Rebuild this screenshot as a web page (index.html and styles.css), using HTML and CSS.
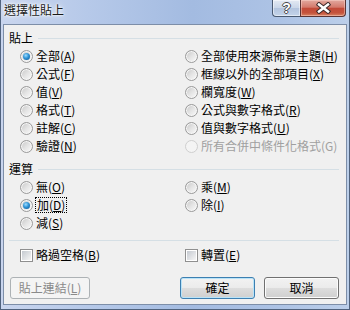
FILE: index.html
```html
<!DOCTYPE html>
<html lang="zh-Hant">
<head>
    <meta charset="UTF-8">
    <title>選擇性貼上</title>
    <link rel="stylesheet" href="styles.css">
</head>
<body>
    <div class="window">
        <div class="titlebar">
            <span class="title">選擇性貼上</span>
            <div class="caption-buttons">
                <span class="cap-btn help">?</span>
                <span class="cap-btn close">
                    <svg width="15" height="12" viewBox="0 0 15 12">
                        <path d="M3 2.5 L12 9.5 M12 2.5 L3 9.5" stroke="#3d2a2a" stroke-width="4.5" stroke-linecap="square"/>
                        <path d="M3 2.5 L12 9.5 M12 2.5 L3 9.5" stroke="#ffffff" stroke-width="2.5" stroke-linecap="square"/>
                    </svg>
                </span>
            </div>
        </div>

        <div class="client">
            <div class="group first">
                <div class="legend"><span>貼上</span></div>
                <div class="options">
                    <div class="option"><span class="radio checked"></span>全部(<u>A</u>)</div>
                    <div class="option"><span class="radio"></span>全部使用來源佈景主題(<u>H</u>)</div>
                    <div class="option"><span class="radio"></span>公式(<u>F</u>)</div>
                    <div class="option"><span class="radio"></span>框線以外的全部項目(<u>X</u>)</div>
                    <div class="option"><span class="radio"></span>值(<u>V</u>)</div>
                    <div class="option"><span class="radio"></span>欄寬度(<u>W</u>)</div>
                    <div class="option"><span class="radio"></span>格式(<u>T</u>)</div>
                    <div class="option"><span class="radio"></span>公式與數字格式(<u>R</u>)</div>
                    <div class="option"><span class="radio"></span>註解(<u>C</u>)</div>
                    <div class="option"><span class="radio"></span>值與數字格式(<u>U</u>)</div>
                    <div class="option"><span class="radio"></span>驗證(<u>N</u>)</div>
                    <div class="option disabled"><span class="radio"></span>所有合併中條件化格式(G)</div>
                </div>
            </div>

            <div class="group">
                <div class="legend"><span>運算</span></div>
                <div class="options">
                    <div class="option"><span class="radio"></span>無(<u>O</u>)</div>
                    <div class="option"><span class="radio"></span>乘(<u>M</u>)</div>
                    <div class="option"><span class="radio checked"></span><span class="focus">加(<u>D</u>)</span></div>
                    <div class="option"><span class="radio"></span>除(<u>I</u>)</div>
                    <div class="option"><span class="radio"></span>減(<u>S</u>)</div>
                </div>
            </div>

            <div class="separator"></div>

            <div class="options checks">
                <div class="option"><span class="checkbox"></span>略過空格(<u>B</u>)</div>
                <div class="option"><span class="checkbox"></span>轉置(<u>E</u>)</div>
            </div>

            <div class="buttons">
                <button class="btn disabled">貼上連結(<u>L</u>)</button>
                <button class="btn default">確定</button>
                <button class="btn">取消</button>
            </div>
        </div>
    </div>
</body>
</html>
```

FILE: styles.css
```css
* {
    margin: 0;
    padding: 0;
    box-sizing: border-box;
}

body {
    font-family: "Noto Sans CJK TC", "Liberation Sans", sans-serif;
    font-size: 12px;
    color: #000;
}

.window {
    width: 350px;
    height: 310px;
    border: 1px solid #50627d;
    border-top: none;
    background: linear-gradient(to right, #c9d5ee 0%, #b6c9e9 25%, #a3bbe1 55%, #adc3e5 80%, #bccfea 100%);
    display: flex;
    flex-direction: column;
}

/* title bar */
.titlebar {
    height: 24px;
    display: flex;
    align-items: flex-start;
}

.title {
    padding: 1px 0 0 3px;
    line-height: 18px;
    color: #1a1a1a;
    text-shadow: 0 0 6px #fff, 0 0 3px #fff, 0 0 2px #fff;
}

.caption-buttons {
    margin-left: auto;
    margin-right: 3px;
    display: flex;
}

.cap-btn {
    height: 17px;
    display: flex;
    align-items: center;
    justify-content: center;
    border: 1px solid #4a5a72;
    border-top: none;
}

.cap-btn.help {
    width: 28px;
    border-right: none;
    border-radius: 0 0 0 4px;
    background: linear-gradient(#e3e9f3 0%, #cbd7e9 48%, #b3c4de 52%, #c4d4ea 100%);
    box-shadow: inset 0 0 0 1px rgba(255, 255, 255, 0.5);
    font-family: "Liberation Sans", sans-serif;
    font-weight: bold;
    font-size: 14px;
    color: #fff;
    text-shadow: 1px 0 0 #4a4a4a, -1px 0 0 #4a4a4a, 0 1px 0 #4a4a4a, 0 -1px 0 #4a4a4a;
}

.cap-btn.close {
    width: 46px;
    border-radius: 0 0 4px 0;
    border-color: #5a3434;
    background: linear-gradient(#e2a99f 0%, #d47a6c 45%, #c24a38 52%, #c4533c 80%, #d88565 100%);
    box-shadow: inset 0 0 0 1px rgba(255, 220, 210, 0.45);
}

/* client area */
.client {
    flex: 1;
    margin: 0 2px 4px 2px;
    border: 1px solid #7d8ea8;
    background: #f0f0f0;
    display: flex;
    flex-direction: column;
}

.group {
    margin-top: 5px;
}

.group.first {
    margin-top: 4px;
}

.legend {
    height: 18px;
    display: flex;
    align-items: center;
    padding: 0 7px 0 5px;
    line-height: 18px;
}

.legend::after {
    content: '';
    flex: 1;
    height: 1px;
    margin-left: 5px;
    background: #d5dfe5;
}

.options {
    display: grid;
    grid-template-columns: 165px 1fr;
    grid-auto-rows: 18px;
    padding-left: 16px;
}

.option {
    display: flex;
    align-items: center;
    white-space: nowrap;
    line-height: 18px;
}

.option.disabled {
    color: #a0a0a0;
}

.radio {
    position: relative;
    width: 13px;
    height: 13px;
    margin-right: 3px;
    flex-shrink: 0;
    border-radius: 50%;
    border: 1px solid #9a9a9a;
    background: linear-gradient(135deg, #c6c6c6 0%, #e4e4e4 50%, #fbfbfb 100%);
    box-shadow: inset 0 0 0 1px #f6f6f6;
}

.option.disabled .radio {
    border-color: #cfcfcf;
    background: #f4f4f4;
    box-shadow: none;
}

.radio.checked::after {
    content: '';
    position: absolute;
    left: 2px;
    top: 2px;
    width: 7px;
    height: 7px;
    border-radius: 50%;
    background: radial-gradient(circle at 40% 35%, #9fdcff 0%, #2f94d6 45%, #0d4f8c 100%);
}

.focus {
    outline: 1px dotted #000;
    outline-offset: 0;
    padding: 0 1px;
    line-height: 14px;
}

.separator {
    height: 1px;
    margin: 8px 7px 0 5px;
    background: #d5dfe5;
}

.checks {
    margin-top: 5px;
}

.checkbox {
    width: 13px;
    height: 13px;
    margin-right: 3px;
    flex-shrink: 0;
    border: 1px solid #8f8f8f;
    padding: 1px;
    background: linear-gradient(135deg, #c4c9d0, #f6f6f6) content-box, #fff;
}

.buttons {
    display: flex;
    margin-top: 13px;
    padding: 0 7px 0 6px;
}

.btn {
    height: 22px;
    width: 75px;
    border: 1px solid #707070;
    border-radius: 3px;
    background: linear-gradient(#f2f2f2 0%, #ebebeb 49%, #dddddd 50%, #cfcfcf 100%);
    box-shadow: inset 0 0 0 1px #fcfcfc;
    font-family: inherit;
    font-size: 12px;
    color: #000;
    line-height: 18px;
    margin-left: 9px;
}

.btn.disabled {
    width: 80px;
    margin-left: 0;
    margin-right: auto;
    border-color: #adb2b5;
    background: #f4f4f4;
    box-shadow: none;
    color: #8a8a8a;
}

.btn.default {
    border-color: #3c7fb1;
    box-shadow: inset 0 0 0 1px #b9e3f8;
    margin-left: 0;
}
```
